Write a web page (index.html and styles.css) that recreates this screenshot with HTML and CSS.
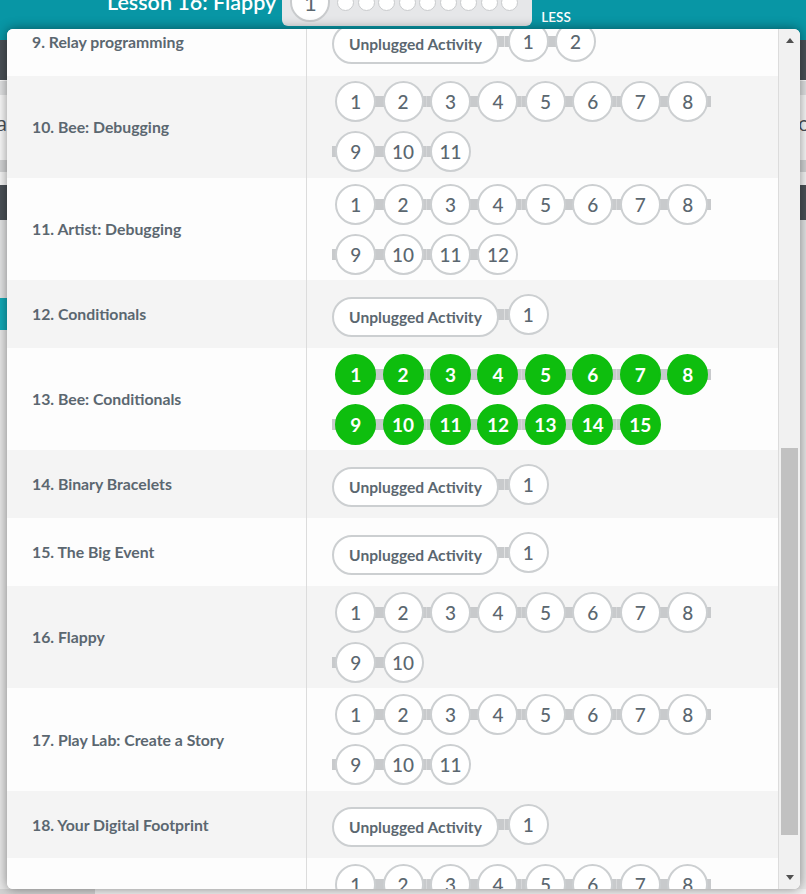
FILE: index.html
```html
<!DOCTYPE html>
<html lang="en">
<head>
<meta charset="utf-8">
<title>Course progress</title>
<link rel="stylesheet" href="styles.css">
</head>
<body>
<div class="page">
  <header class="topbar">
    <div class="lesson-row">
      <h1 class="lesson-title">Lesson 16: Flappy</h1>
      <div class="mini-progress">
        <span class="mini-big">1</span>
        <span class="mini-dot"></span><span class="mini-dot"></span><span class="mini-dot"></span>
        <span class="mini-dot"></span><span class="mini-dot"></span><span class="mini-dot"></span>
        <span class="mini-dot"></span><span class="mini-dot"></span><span class="mini-dot"></span>
      </div>
      <span class="less">LESS</span>
    </div>
  </header>
  <div class="band dark"></div>
  <div class="band line"></div>
  <div class="band pale"></div>
  <div class="band textrow"><span class="bg-left">a</span><span class="bg-right">ov</span></div>
  <div class="band grey"></div>
  <div class="band white"></div>
  <div class="band dark"></div>
  <div class="band light"></div>
  <div class="band tealrow"><span class="teal-btn"></span></div>
  <div class="band rest"></div>
  <div class="band foot"><span class="foot-block"></span></div>
</div>

<div class="dialog">
  <div class="scroller">
    <div class="lessons">
      <div class="row odd">
        <div class="name">9. Relay programming</div>
        <div class="dots">
          <span class="pill-wrap"><span class="pill">Unplugged Activity</span></span>
          <span class="dw"><span class="dot">1</span></span>
          <span class="dw last"><span class="dot">2</span></span>
        </div>
      </div>
      <div class="row even">
        <div class="name">10. Bee: Debugging</div>
        <div class="dots">
          <span class="dw first"><span class="dot">1</span></span>
          <span class="dw"><span class="dot">2</span></span>
          <span class="dw"><span class="dot">3</span></span>
          <span class="dw"><span class="dot">4</span></span>
          <span class="dw"><span class="dot">5</span></span>
          <span class="dw"><span class="dot">6</span></span>
          <span class="dw"><span class="dot">7</span></span>
          <span class="dw"><span class="dot">8</span></span>
          <span class="dw"><span class="dot">9</span></span>
          <span class="dw"><span class="dot">10</span></span>
          <span class="dw last"><span class="dot">11</span></span>
        </div>
      </div>
      <div class="row odd">
        <div class="name">11. Artist: Debugging</div>
        <div class="dots">
          <span class="dw first"><span class="dot">1</span></span>
          <span class="dw"><span class="dot">2</span></span>
          <span class="dw"><span class="dot">3</span></span>
          <span class="dw"><span class="dot">4</span></span>
          <span class="dw"><span class="dot">5</span></span>
          <span class="dw"><span class="dot">6</span></span>
          <span class="dw"><span class="dot">7</span></span>
          <span class="dw"><span class="dot">8</span></span>
          <span class="dw"><span class="dot">9</span></span>
          <span class="dw"><span class="dot">10</span></span>
          <span class="dw"><span class="dot">11</span></span>
          <span class="dw last"><span class="dot">12</span></span>
        </div>
      </div>
      <div class="row even">
        <div class="name">12. Conditionals</div>
        <div class="dots">
          <span class="pill-wrap"><span class="pill">Unplugged Activity</span></span>
          <span class="dw last"><span class="dot">1</span></span>
        </div>
      </div>
      <div class="row odd">
        <div class="name">13. Bee: Conditionals</div>
        <div class="dots">
          <span class="dw first"><span class="dot done">1</span></span>
          <span class="dw"><span class="dot done">2</span></span>
          <span class="dw"><span class="dot done">3</span></span>
          <span class="dw"><span class="dot done">4</span></span>
          <span class="dw"><span class="dot done">5</span></span>
          <span class="dw"><span class="dot done">6</span></span>
          <span class="dw"><span class="dot done">7</span></span>
          <span class="dw"><span class="dot done">8</span></span>
          <span class="dw"><span class="dot done">9</span></span>
          <span class="dw"><span class="dot done">10</span></span>
          <span class="dw"><span class="dot done">11</span></span>
          <span class="dw"><span class="dot done">12</span></span>
          <span class="dw"><span class="dot done">13</span></span>
          <span class="dw"><span class="dot done">14</span></span>
          <span class="dw last"><span class="dot done">15</span></span>
        </div>
      </div>
      <div class="row even">
        <div class="name">14. Binary Bracelets</div>
        <div class="dots">
          <span class="pill-wrap"><span class="pill">Unplugged Activity</span></span>
          <span class="dw last"><span class="dot">1</span></span>
        </div>
      </div>
      <div class="row odd">
        <div class="name">15. The Big Event</div>
        <div class="dots">
          <span class="pill-wrap"><span class="pill">Unplugged Activity</span></span>
          <span class="dw last"><span class="dot">1</span></span>
        </div>
      </div>
      <div class="row even">
        <div class="name">16. Flappy</div>
        <div class="dots">
          <span class="dw first"><span class="dot">1</span></span>
          <span class="dw"><span class="dot">2</span></span>
          <span class="dw"><span class="dot">3</span></span>
          <span class="dw"><span class="dot">4</span></span>
          <span class="dw"><span class="dot">5</span></span>
          <span class="dw"><span class="dot">6</span></span>
          <span class="dw"><span class="dot">7</span></span>
          <span class="dw"><span class="dot">8</span></span>
          <span class="dw"><span class="dot">9</span></span>
          <span class="dw last"><span class="dot">10</span></span>
        </div>
      </div>
      <div class="row odd">
        <div class="name">17. Play Lab: Create a Story</div>
        <div class="dots">
          <span class="dw first"><span class="dot">1</span></span>
          <span class="dw"><span class="dot">2</span></span>
          <span class="dw"><span class="dot">3</span></span>
          <span class="dw"><span class="dot">4</span></span>
          <span class="dw"><span class="dot">5</span></span>
          <span class="dw"><span class="dot">6</span></span>
          <span class="dw"><span class="dot">7</span></span>
          <span class="dw"><span class="dot">8</span></span>
          <span class="dw"><span class="dot">9</span></span>
          <span class="dw"><span class="dot">10</span></span>
          <span class="dw last"><span class="dot">11</span></span>
        </div>
      </div>
      <div class="row even">
        <div class="name">18. Your Digital Footprint</div>
        <div class="dots">
          <span class="pill-wrap"><span class="pill">Unplugged Activity</span></span>
          <span class="dw last"><span class="dot">1</span></span>
        </div>
      </div>
      <div class="row odd">
        <div class="name">19. Artist: Loops</div>
        <div class="dots">
          <span class="dw first"><span class="dot">1</span></span>
          <span class="dw"><span class="dot">2</span></span>
          <span class="dw"><span class="dot">3</span></span>
          <span class="dw"><span class="dot">4</span></span>
          <span class="dw"><span class="dot">5</span></span>
          <span class="dw"><span class="dot">6</span></span>
          <span class="dw"><span class="dot">7</span></span>
          <span class="dw"><span class="dot">8</span></span>
          <span class="dw"><span class="dot">9</span></span>
          <span class="dw last"><span class="dot">10</span></span>
        </div>
      </div>
    </div>
  </div>
  <div class="scrollbar">
    <span class="sb-btn"><span class="arrow-up"></span></span>
    <div class="track"><span class="thumb"></span></div>
    <span class="sb-btn"><span class="arrow-down"></span></span>
  </div>
</div>
</body>
</html>
```

FILE: styles.css
```css
* { box-sizing: border-box; }

html, body {
  margin: 0;
  padding: 0;
  width: 806px;
  height: 894px;
  overflow: hidden;
  background: #ececec;
  font-family: "Lato", "Open Sans", sans-serif;
}

.page {
  display: flex;
  flex-direction: column;
  width: 806px;
  height: 894px;
  overflow: hidden;
}

/* ---------- background page ---------- */
.topbar {
  height: 40px;
  flex: none;
  background: #0896a5;
  overflow: hidden;
}

.lesson-row {
  display: flex;
  align-items: center;
  height: 48px;
  margin-top: -22px;
  padding-left: 107px;
}

.lesson-title {
  margin: 0 6px 0 0;
  font-size: 21.5px;
  font-weight: 600;
  color: #fff;
  line-height: 48px;
  white-space: nowrap;
}

.mini-progress {
  display: flex;
  align-items: center;
  height: 48px;
  width: 250px;
  padding: 0 8px;
  background: #e6e7e9;
  border-radius: 0 0 6px 6px;
}

.mini-big {
  width: 40px;
  height: 40px;
  flex: none;
  border-radius: 50%;
  border: 2px solid #c9cbcd;
  background: #fff;
  display: flex;
  align-items: center;
  justify-content: center;
  font-size: 22px;
  color: #5b6770;
  margin-right: 7px;
}

.mini-dot {
  width: 17px;
  height: 17px;
  flex: none;
  border-radius: 50%;
  border: 1.5px solid #c9cbcd;
  background: #fff;
  margin-right: 3.5px;
}

.less {
  align-self: flex-end;
  margin: 0 0 3px 9px;
  font-size: 13.5px;
  font-weight: 600;
  color: #fff;
  line-height: 12px;
}

.band { flex: none; width: 100%; }
.dark { height: 40px; background: #4b5157; }
.line { height: 1px; background: #fff; }
.pale { height: 14px; background: #e2e3e4; }
.textrow {
  height: 65px;
  background: #fafafa;
  display: flex;
  align-items: center;
  justify-content: space-between;
  font-family: "Open Sans", sans-serif;
  font-size: 20px;
  color: #4b5157;
  overflow: hidden;
  padding-bottom: 8px;
}
.bg-left { margin-left: -4px; }
.bg-right { margin-right: -14px; }
.grey { height: 12px; background: #d4d5d6; }
.white { height: 13px; background: #f7f7f7; }
.white + .dark { height: 35px; }
.light { height: 78px; background: #e4e5e6; }
.tealrow { height: 32px; background: #e4e5e6; display: flex; }
.teal-btn { width: 60px; background: #12aab7; }
.rest { height: 559px; background: #e8e8e8; }
.foot { height: 5px; background: #f2f2f2; display: flex; }
.foot-block { width: 95px; background: #d3d3d3; }

/* ---------- dialog ---------- */
.dialog {
  position: absolute;
  left: 7px;
  top: 29px;
  width: 793px;
  height: 860px;
  display: flex;
  background: #fff;
  border-radius: 6px;
  overflow: hidden;
  box-shadow: 0 0 12px rgba(0, 0, 0, 0.45);
}

.scroller {
  width: 771px;
  flex: none;
  overflow: hidden;
}

.lessons {
  margin-top: -21px;
}

.row {
  display: grid;
  grid-template-columns: 300px 471px;
}
.row.odd { background: #fdfdfd; }
.row.even { background: #f4f4f4; }

.name {
  display: flex;
  align-items: center;
  padding: 25px 20px 25px 25px;
  border-right: 1px solid #dcdcdc;
  font-size: 15.8px;
  line-height: 17.8px;
  font-weight: 700;
  color: #5b6770;
  white-space: nowrap;
}

.dots {
  display: flex;
  flex-wrap: wrap;
  align-items: center;
  align-content: center;
  padding: 1.15px 25px;
}

.dw, .pill-wrap {
  display: flex;
  align-items: center;
  justify-content: center;
  height: 50px;
  background: linear-gradient(#c8cacc, #c8cacc) center / 100% 11px no-repeat;
}
.dw { width: 47.43px; }
.dw.first, .pill-wrap {
  background-position: right center;
  background-size: 50% 11px;
}
.dw.last {
  background-position: left center;
  background-size: 50% 11px;
}

.dot {
  width: 41px;
  height: 41px;
  border-radius: 50%;
  border: 2px solid #cccfd1;
  background: #fff;
  display: flex;
  align-items: center;
  justify-content: center;
  font-size: 19px;
  font-weight: 500;
  color: #5b6770;
}
.dot.done {
  background: #0ebe0e;
  border-color: #0ebe0e;
  color: #fff;
  font-weight: 700;
}

.pill-wrap {
  justify-content: flex-start;
  padding-right: 5.5px;
}
.pill {
  width: 167px;
  height: 40px;
  margin-top: 5px;
  border-radius: 20px;
  border: 2px solid #cccfd1;
  background: #fff;
  display: flex;
  align-items: center;
  justify-content: center;
  font-size: 15.6px;
  font-weight: 700;
  color: #5b6770;
  white-space: nowrap;
}

/* ---------- scrollbar ---------- */
.scrollbar {
  width: 22px;
  flex: none;
  display: flex;
  flex-direction: column;
  background: #f1f1f1;
  border-left: 1px solid #dcdcdc;
}
.sb-btn {
  height: 23px;
  flex: none;
  display: flex;
  align-items: center;
  justify-content: center;
}
.arrow-up {
  width: 0;
  height: 0;
  border-left: 4.5px solid transparent;
  border-right: 4.5px solid transparent;
  border-bottom: 5px solid #505050;
}
.arrow-down {
  width: 0;
  height: 0;
  border-left: 4.5px solid transparent;
  border-right: 4.5px solid transparent;
  border-top: 5px solid #505050;
}
.track {
  flex: 1;
  padding-left: 2px;
}
.thumb {
  display: block;
  width: 17px;
  height: 387px;
  margin-top: 396px;
  background: #c1c1c1;
}
```
